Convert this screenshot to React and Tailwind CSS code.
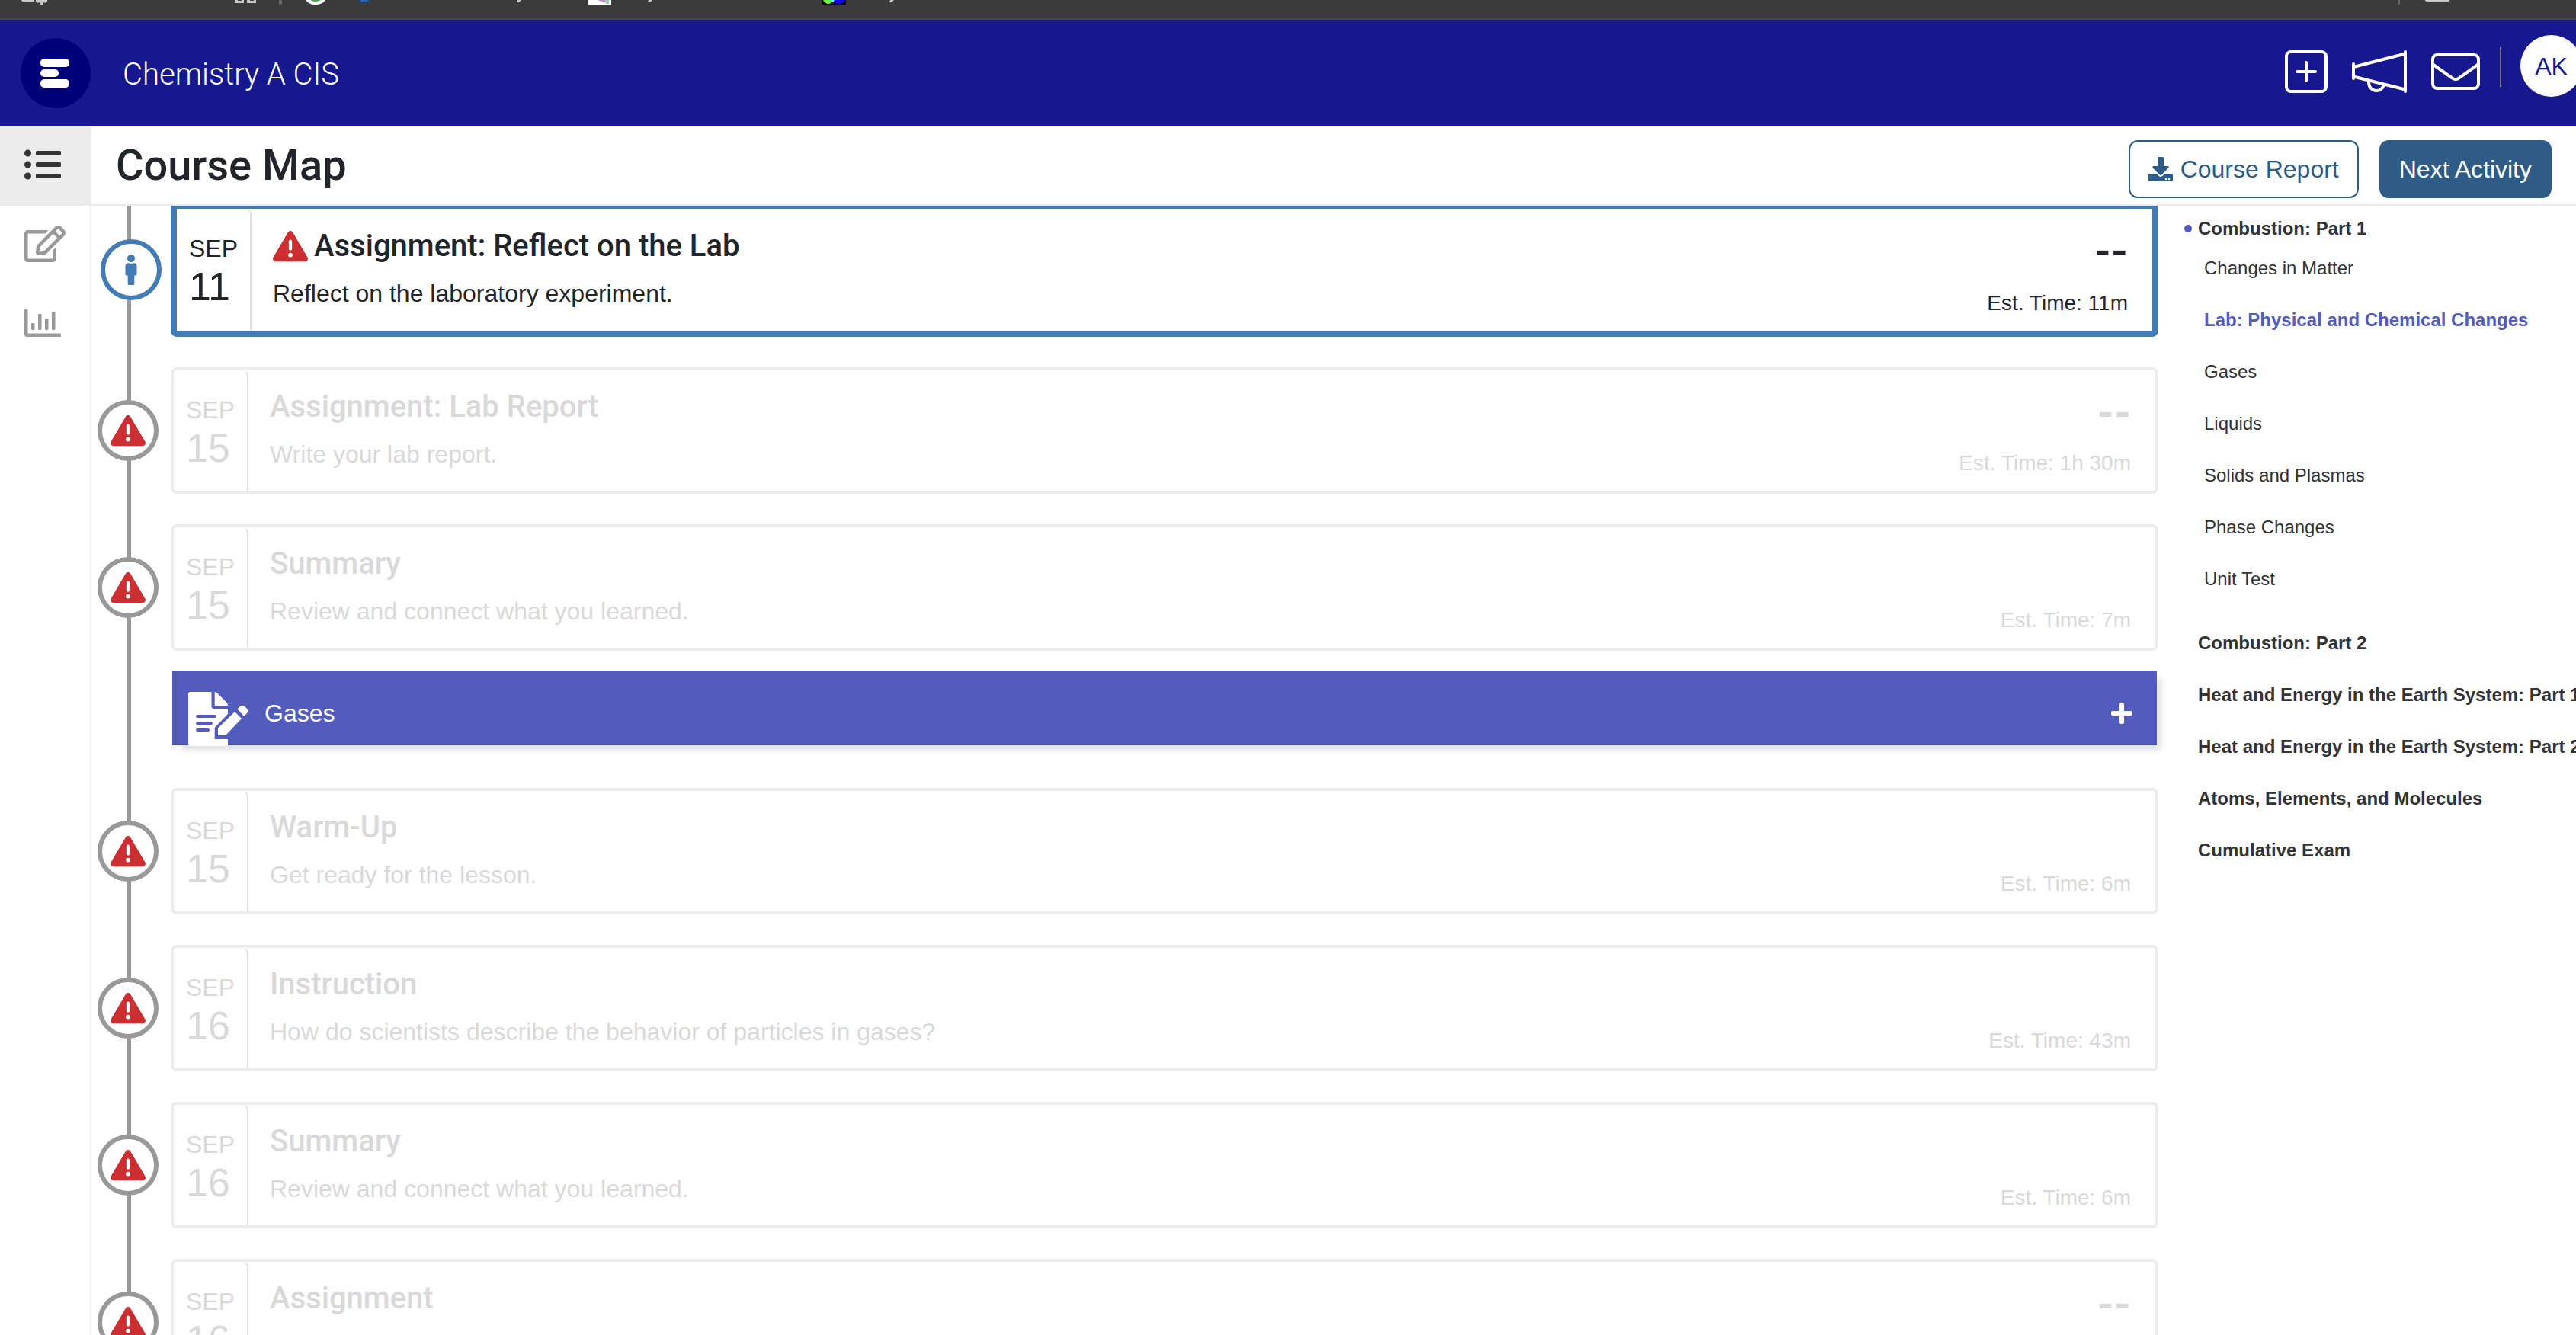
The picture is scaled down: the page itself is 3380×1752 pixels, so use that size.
import React, {useState} from 'react';
import {FaListUl, FaRegEdit, FaRegChartBar, FaMale, FaPlus} from 'react-icons/fa';
import {FaTriangleExclamation} from 'react-icons/fa6';

const labItems = [
  {id: 1, month: 'SEP', day: '11', title: 'Assignment: Reflect on the Lab', text: 'Reflect on the laboratory experiment.', time: '11m', score: '--', current: true},
  {id: 2, month: 'SEP', day: '15', title: 'Assignment: Lab Report', text: 'Write your lab report.', time: '1h 30m', score: '--'},
  {id: 3, month: 'SEP', day: '15', title: 'Summary', text: 'Review and connect what you learned.', time: '7m'},
];

const gasItems = [
  {id: 4, month: 'SEP', day: '15', title: 'Warm-Up', text: 'Get ready for the lesson.', time: '6m'},
  {id: 5, month: 'SEP', day: '16', title: 'Instruction', text: 'How do scientists describe the behavior of particles in gases?', time: '43m'},
  {id: 6, month: 'SEP', day: '16', title: 'Summary', text: 'Review and connect what you learned.', time: '6m'},
  {id: 7, month: 'SEP', day: '16', title: 'Assignment', score: '--'},
];

const lessons = ['Changes in Matter', 'Lab: Physical and Chemical Changes', 'Gases', 'Liquids', 'Solids and Plasmas', 'Phase Changes', 'Unit Test'];

const units = [
  'Combustion: Part 2',
  'Heat and Energy in the Earth System: Part 1',
  'Heat and Energy in the Earth System: Part 2',
  'Atoms, Elements, and Molecules',
  'Cumulative Exam',
];

// bottom edge of the browser's bookmark bar
const BrowserStrip = () => (
  <div className="flex h-[26px] shrink-0 justify-between border-b-2 border-[#454545] bg-[#3b3b3b]">
    <svg width="1200" height="8" viewBox="0 0 1200 8" aria-hidden="true">
      <path d="M28 0h17v1q0 1-2 1H30q-2 0-2-2z" fill="#c8c8c8" />
      <path d="M47 0h15v2l-2 2-3-1-1 3h-3l-1-3-3 1-2-2z" fill="#c8c8c8" />
      <path d="M308 0h12v4h-12zM324 0h12v4h-12z" fill="#c8c8c8" />
      <path d="M312 0h5v1h-5zM328 0h5v1h-5z" fill="#3b3b3b" />
      <path d="M366 0h4v5q-2 2-4 0z" fill="#666" />
      <path d="M401 0q4 6 13 6t13-6z" fill="#fff" />
      <path d="M407 0q7 4 14 0z" fill="#4ba455" />
      <path d="M469 0h18l-4 4h-10z" fill="#24406a" />
      <path d="M472 0h12l-2 2h-8z" fill="#2566ad" />
      <path d="M679 0h5l-3 3h-3zM851 0h5l-3 3h-3zM1168 0h5l-3 3h-3z" fill="#c8c8c8" />
      <path d="M772 0h30v6h-30z" fill="#fff" />
      <path d="M784 0h10v4z" fill="#b892c4" />
      <path d="M794 0h5v5h-4z" fill="#9cc4ae" />
      <path d="M1078 0h32v6h-32z" fill="#0a0a0a" />
      <path d="M1080 0h13q-2 5-6 5t-7-5z" fill="#6cff3c" />
      <path d="M1091 0h4l-1 3h-4z" fill="#6ff" />
      <path d="M1095 0h14q-3 5-8 5t-7-3z" fill="#1400ff" />
    </svg>
    <svg width="240" height="8" viewBox="0 0 240 8" aria-hidden="true">
      <path d="M6 0h3v5q-1 2-3 0z" fill="#666" />
      <path d="M42 0h32q0 2-3 2H45q-3 0-3-2z" fill="#c8c8c8" />
    </svg>
  </div>
);

const Header = () => (
  <header className="flex h-[140px] shrink-0 items-start justify-between overflow-hidden bg-[#17178f]">
    <div className="flex h-full items-center pl-[27px]">
      <a href="#home" aria-label="Home">
        <svg width="92" height="92" viewBox="0 0 92 92">
          <circle cx="46" cy="46" r="46" fill="#000078" />
          <rect x="26" y="27" width="38" height="11" rx="5" fill="#fff" />
          <rect x="26" y="41" width="24" height="10" rx="5" fill="#fff" />
          <rect x="26" y="54" width="38" height="11" rx="5" fill="#fff" />
        </svg>
      </a>
      <span className="mt-1 ml-[42px] font-[Roboto,sans-serif] text-[40px] font-light text-white">Chemistry A CIS</span>
    </div>
    <div className="-mr-2 flex items-start pt-5">
      <button type="button" aria-label="Add" className="mt-5 mr-8">
        <svg width="56" height="56" viewBox="0 0 56 56" fill="none" stroke="#fff" strokeWidth="4" strokeLinecap="round">
          <rect x="2" y="2" width="52" height="52" rx="6" />
          <path d="M28 16v24M16 28h24" />
        </svg>
      </button>
      <button type="button" aria-label="Announcements" className="mt-5 mr-8">
        <svg width="72" height="56" viewBox="0 0 72 56" fill="none" stroke="#fff" strokeWidth="4">
          <path d="M2 18v19M70 2v52" strokeLinecap="round" />
          <path d="M2 22L70 4.500M2 34.500L70 51.500" />
          <path d="M22 40v3a10.200 11 0 0 0 20 2" />
        </svg>
      </button>
      <button type="button" aria-label="Messages" className="mt-6 mr-[26px]">
        <svg width="64" height="48" viewBox="0 0 64 48" fill="none" stroke="#fff" strokeWidth="4">
          <rect x="2" y="2" width="60" height="44" rx="6" />
          <path d="M3 15l24 17q5 4 10 0l24-17" />
        </svg>
      </button>
      <div className="mt-4 mr-[25px] h-13 w-0.5 bg-[#77777f]" />
      <button type="button" className="flex size-[81px] items-center justify-center rounded-full bg-white text-[32px] text-[#17178f]">AK</button>
    </div>
  </header>
);

const SideNav = () => (
  <nav className="w-[120px] shrink-0 border-r-2 border-[#ebebeb]">
    <a href="#map" aria-label="Course map" className="-mr-0.5 flex h-[104px] items-center bg-[#ececec] pl-8 text-[#333]">
      <FaListUl size={48} className="-mt-1" />
    </a>
    <a href="#work" aria-label="Activities" className="mt-6 flex h-[52px] items-center pl-8 text-[#999]">
      <FaRegEdit size={48} className="w-[54px]" />
    </a>
    <a href="#grades" aria-label="Grades" className="mt-[54px] flex h-12 items-center pl-8 text-[#999]">
      <FaRegChartBar size={48} />
    </a>
  </nav>
);

const DownloadIcon = () => (
  <svg width="32" height="32" viewBox="0 0 512 512" fill="currentColor" aria-hidden="true">
    <path d="M216 0h80c13.300 0 24 10.700 24 24v168h87.700c17.800 0 26.700 21.500 14.100 34.100L269.700 378.300c-7.500 7.500-19.800 7.500-27.300 0L90.100 226.100c-12.600-12.600-3.700-34.100 14.100-34.100H192V24c0-13.300 10.700-24 24-24zm296 376v112c0 13.300-10.700 24-24 24H24c-13.300 0-24-10.700-24-24V376c0-13.300 10.700-24 24-24h146.700l49 49c20.100 20.100 52.500 20.100 72.600 0l49-49H488c13.300 0 24 10.700 24 24zm-124 88c0-11-9-20-20-20s-20 9-20 20 9 20 20 20 20-9 20-20zm64 0c0-11-9-20-20-20s-20 9-20 20 9 20 20 20 20-9 20-20z" />
  </svg>
);

const ActivityCard = ({item}) => {
  const current = item.current;
  return (
    <li className="flex items-center">
      <div className={current ? 'w-[104px] shrink-0 pl-3' : 'w-[104px] shrink-0 pl-2'}>
        <div className={`relative flex size-20 items-center justify-center rounded-full border-6 bg-white ${current ? 'border-[#437bb5] text-[#437bb5]' : 'border-[#999] text-[#cb2f31]'}`}>
          {current ? <FaMale size={40} /> : <FaTriangleExclamation size={46} />}
        </div>
      </div>
      <article className={`flex min-w-0 flex-1 rounded-lg ${current ? 'border-8 border-[#437bb5] text-[#212529]' : 'border-4 border-[#ececec] text-[#d9d9d9]'}`}>
        <div className="w-[98px] shrink-0 rounded-tr-lg border-r-2 border-[#dfe0e4] pt-8 pl-4">
          <div className="text-[32px] leading-10">{item.month}</div>
          <div className="text-[52px] leading-[60px]">{item.day}</div>
        </div>
        <div className={`min-w-0 flex-1 pl-7 ${current ? 'py-[25px]' : 'py-6'}`}>
          <h2 className="flex items-center gap-2 font-[Roboto,sans-serif] text-[40px] leading-12 font-medium">
            {current && <FaTriangleExclamation size={46} className="text-[#cb2f31]" />}
            {item.title}
          </h2>
          <p className="mt-3.5 min-h-12 text-[32px] leading-12">{item.text}</p>
        </div>
        <div className="flex flex-col items-end justify-between pt-7 pr-8 pb-5">
          <span className="font-[Roboto,sans-serif] text-[56px] leading-[56px] font-bold">{item.score}</span>
          {item.time && <span className="text-[28px] leading-8">Est. Time: {item.time}</span>}
        </div>
      </article>
    </li>
  );
};

const LessonBar = ({title, open, onToggle}) => (
  <button
    type="button"
    aria-expanded={open}
    onClick={onToggle}
    className="relative mt-[26px] mr-0.5 ml-[106px] flex h-[98px] items-start border-b-2 border-[#444da6] bg-[#535cbd] pt-7 pr-[30px] pl-[21px] text-white shadow-[8px_8px_8px_-2px_rgba(0,0,0,0.12)]"
  >
    <svg width="78" height="71" viewBox="0 0 78 71" fill="#fff" className="shrink-0" aria-hidden="true">
      <path d="M3 0h27.500v19q0 3 3 3H52v7L34.700 47v15H52v7q0 2-2 2H2q-2 0-2-2V3q0-3 3-3z" />
      <path d="M34.700 0q2 0 4 2L51 14.500q1 1 1 3.500H34.700z" />
      <path d="M61 26l9 9-21 22H39v-9.500z" />
      <path d="M64.500 22.500l3-3q3.500-3.500 7 0l2 2q3.500 3.500 0 7L73 32z" />
      <g fill="#535cbd">
        <rect x="10" y="30" width="27" height="4" rx="2" />
        <rect x="10" y="39" width="22" height="4" rx="2" />
        <rect x="10" y="48" width="18" height="4" rx="2" />
      </g>
    </svg>
    <span className="ml-[22px] text-[32px] leading-[56px]">{title}</span>
    <span className="ml-auto flex h-14 items-center">
      <FaPlus size={32} />
    </span>
  </button>
);

const CourseOutline = () => (
  <nav aria-label="Units" className="w-[548px] shrink-0 overflow-hidden pt-3.5 pl-[34px] text-2xl whitespace-nowrap text-[#333]">
    <a href="#unit-1" className="flex items-center gap-2 font-bold">
      <span className="size-2.5 rounded-full bg-[#535cbd]" />
      Combustion: Part 1
    </a>
    <ul className="mt-0.5 pl-[26px]">
      {lessons.map((lesson) => (
        <li key={lesson} className="leading-[68px]">
          <a href="#lesson" className={lesson.startsWith('Lab') ? 'font-bold text-[#535cbd]' : ''}>{lesson}</a>
        </li>
      ))}
    </ul>
    <ul className="mt-4 pl-[18px]">
      {units.map((unit) => (
        <li key={unit} className="leading-[68px] font-bold">
          <a href="#unit">{unit}</a>
        </li>
      ))}
    </ul>
  </nav>
);

const App = () => {
  const [open, setOpen] = useState(true);

  return (
    <div className="flex h-screen flex-col overflow-hidden bg-white font-['Liberation_Sans',Arial,sans-serif]">
      <BrowserStrip />
      <Header />
      <div className="flex min-h-0 flex-1">
        <SideNav />
        <main className="flex min-w-0 flex-1 flex-col">
          <div className="flex h-[104px] shrink-0 items-center justify-between border-b-2 border-[#ebebeb] px-8">
            <h1 className="font-[Roboto,sans-serif] text-[56px] leading-none font-medium text-[#212529]">Course Map</h1>
            <div className="mb-2 flex gap-[27px] self-end text-[32px]">
              <button type="button" className="flex h-[76px] items-center gap-2.5 rounded-xl border-2 border-[#2f5c86] px-6 text-[#2f5c86]">
                <DownloadIcon />
                Course Report
              </button>
              <button type="button" className="h-[76px] rounded-xl bg-[#2f5c86] px-[26px] text-white">Next Activity</button>
            </div>
          </div>
          <div className="flex min-h-0 flex-1 overflow-hidden">
            <section className="relative -mt-1 flex min-w-0 flex-1 flex-col">
              <div className="absolute inset-y-0 left-[46px] w-1.5 bg-[#999]" />
              <ul className="space-y-10">
                {labItems.map((item) => <ActivityCard key={item.id} item={item} />)}
              </ul>
              <LessonBar title="Gases" open={open} onToggle={() => setOpen(!open)} />
              {open && (
                <ul className="mt-14 space-y-10">
                  {gasItems.map((item) => <ActivityCard key={item.id} item={item} />)}
                </ul>
              )}
            </section>
            <CourseOutline />
          </div>
        </main>
      </div>
    </div>
  );
};

export default App;
